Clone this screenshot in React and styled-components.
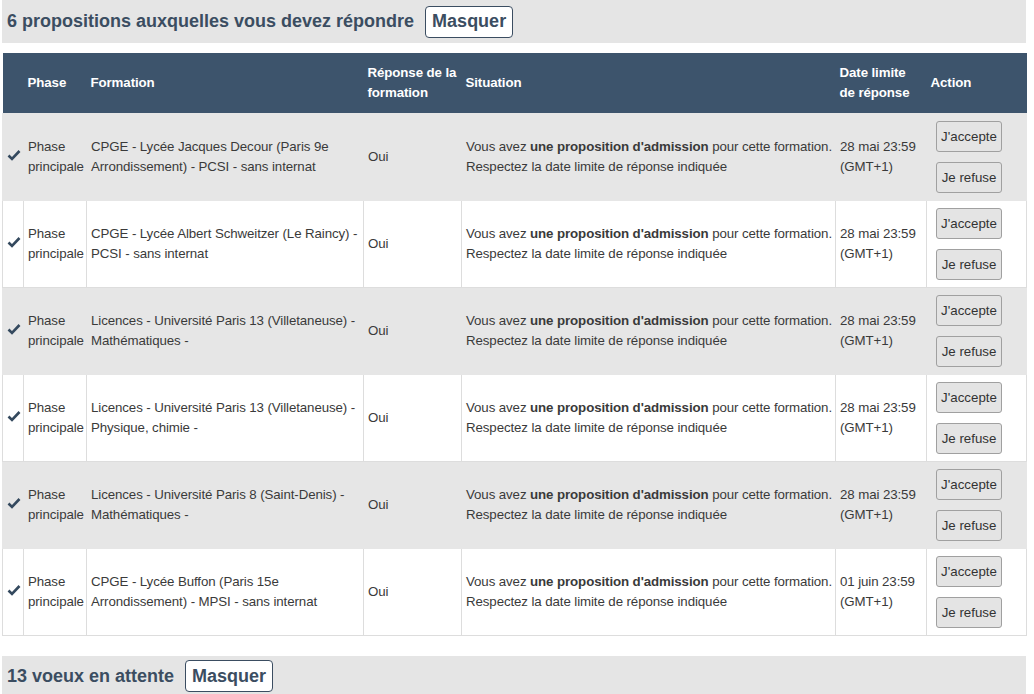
import React from 'react';
import styled, { createGlobalStyle } from 'styled-components';

const Global = createGlobalStyle`
  body { margin: 0; padding: 0 8px 0 2px; font-family: "Liberation Sans", Arial, sans-serif; background: #fff; }
`;

const Page = styled.div`
  width: 1024px;
`;

const SectionBar = styled.div`
  background: #e5e5e5;
  height: ${p => p.h}px;
  display: flex;
  align-items: center;
  gap: 11px;
  padding-left: 5px;
  margin-top: ${p => p.mt}px;
`;

const Title = styled.h2`
  margin: 0;
  font-size: 18px;
  font-weight: bold;
  color: #3b4d61;
`;

const ToggleButton = styled.button`
  font-family: inherit;
  font-size: 18px;
  font-weight: bold;
  color: #3b4d61;
  background: #fff;
  border: 1px solid #3b4d61;
  border-radius: 4px;
  height: 32px;
  padding: 0 6px;
`;

const Table = styled.table`
  width: 1024px;
  border-collapse: collapse;
  table-layout: fixed;
  margin-top: 10px;
  font-size: 13.3px;
  letter-spacing: -0.1px;
  color: #3a3a3a;
`;

const Th = styled.th`
  background: #3d546c;
  color: #fff;
  text-align: left;
  font-size: 13.3px;
  line-height: 20px;
  height: 60px;
  padding: 0 4px;
  vertical-align: middle;
`;

const Row = styled.tr`
  background: ${p => (p.$odd ? '#e6e6e6' : '#fff')};
  height: 87px;
`;

const Td = styled.td`
  border: 1px solid ${p => (p.$odd ? '#e6e6e6' : '#dddddd')};
  padding: 0 3px 0 4px;
  line-height: 20px;
  vertical-align: middle;
`;

const ActionCell = styled(Td)`
  padding: 0 9px;
`;

const Btn = styled.button`
  display: block;
  width: 66px;
  height: 31px;
  font-family: inherit;
  font-size: 13.3px;
  color: #333;
  background: #e4e4e4;
  border: 1px solid #a0a0a0;
  border-radius: 3px;
  margin: 3px 0;
  padding: 0;
  & + & { margin-top: 10px; }
`;

const Check = () => (
  <svg width="14" height="12" viewBox="0 0 14 12">
    <path d="M1.5 6.5 L5 10 L12.5 2" fill="none" stroke="#34495e" strokeWidth="2.6" />
  </svg>
);

const rows = [
  ['CPGE - Lycée Jacques Decour (Paris 9e Arrondissement) - PCSI - sans internat', '28 mai 23:59'],
  ['CPGE - Lycée Albert Schweitzer (Le Raincy) - PCSI - sans internat', '28 mai 23:59'],
  ['Licences - Université Paris 13 (Villetaneuse) - Mathématiques -', '28 mai 23:59'],
  ['Licences - Université Paris 13 (Villetaneuse) - Physique, chimie -', '28 mai 23:59'],
  ['Licences - Université Paris 8 (Saint-Denis) - Mathématiques -', '28 mai 23:59'],
  ['CPGE - Lycée Buffon (Paris 15e Arrondissement) - MPSI - sans internat', '01 juin 23:59'],
];

export default function App() {
  return (
    <Page>
      <Global />
      <SectionBar h={43} mt={0}>
        <Title>6 propositions auxquelles vous devez répondre</Title>
        <ToggleButton>Masquer</ToggleButton>
      </SectionBar>
      <Table>
        <colgroup>
          <col style={{ width: 21 }} />
          <col style={{ width: 63 }} />
          <col style={{ width: 277 }} />
          <col style={{ width: 98 }} />
          <col style={{ width: 374 }} />
          <col style={{ width: 91 }} />
          <col style={{ width: 100 }} />
        </colgroup>
        <thead>
          <tr>
            <Th />
            <Th>Phase</Th>
            <Th>Formation</Th>
            <Th>Réponse de la formation</Th>
            <Th>Situation</Th>
            <Th>Date limite de réponse</Th>
            <Th>Action</Th>
          </tr>
        </thead>
        <tbody>
          {rows.map(([f, d], i) => {
            const odd = i % 2 === 0;
            return (
              <Row key={i} $odd={odd}>
                <Td $odd={odd}><Check /></Td>
                <Td $odd={odd}>Phase principale</Td>
                <Td $odd={odd}>{f}</Td>
                <Td $odd={odd}>Oui</Td>
                <Td $odd={odd}>
                  Vous avez <b>une proposition d'admission</b> pour cette formation. Respectez la date limite de réponse indiquée
                </Td>
                <Td $odd={odd}>{d} (GMT+1)</Td>
                <ActionCell $odd={odd}>
                  <Btn>J'accepte</Btn>
                  <Btn>Je refuse</Btn>
                </ActionCell>
              </Row>
            );
          })}
        </tbody>
      </Table>
      <SectionBar h={40} mt={20}>
        <Title>13 voeux en attente</Title>
        <ToggleButton>Masquer</ToggleButton>
      </SectionBar>
    </Page>
  );
}
